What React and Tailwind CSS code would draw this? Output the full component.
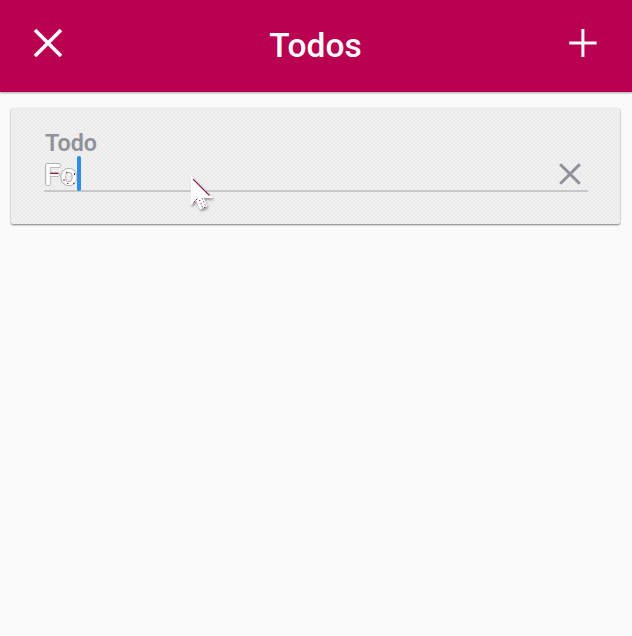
function Header() {
  return (
    <header className="relative z-10 flex h-[92px] shrink-0 items-start justify-between bg-[#b90051] px-[33px] shadow-[0_1px_2px_rgba(0,0,0,0.35)]">
      <svg className="mt-[28px] h-[30px] w-[30px]" viewBox="0 0 30 30" fill="none" stroke="#fff" strokeWidth="3.6" aria-label="Close">
        <path d="M2 2 28 28M28 2 2 28" />
      </svg>
      <h1 className="mt-[26px] text-[33.5px] leading-[40px] font-medium text-white">Todos</h1>
      <svg className="mt-[28px] mr-[1px] h-[30px] w-[30px]" viewBox="0 0 30 30" fill="none" stroke="#fff" strokeWidth="3" aria-label="Add">
        <path d="M14.9 1v28M1.2 15h27.4" />
      </svg>
    </header>
  );
}

function Pointer() {
  return (
    <svg className="absolute left-[187px] top-[171px] h-[44px] w-[34px] drop-shadow-[1px_2px_1px_rgba(0,0,0,0.35)]" viewBox="187 171 34 44" fill="none">
      <path d="M190.7 174.5v31l5.3-4.8 4.2 8.8 7.3-3.2-3.7-8.3h9.2z" fill="#fff" />
      <path d="M193 179 209.5 195.5" stroke="#8d1747" strokeWidth="1.1" />
      <path d="m193.5 202.5 4.5-4.5" stroke="#8d1747" strokeWidth="1" strokeDasharray="2 1" />
      <path d="m199.5 200 3.5 8.2 3-1.4-3.8-8.6" stroke="#8d1747" strokeWidth="1" strokeDasharray="1.2 2.2" />
    </svg>
  );
}

function TodoField() {
  return (
    <section className="ml-[11px] mr-[12px] mt-[16px] flex h-[116px] shrink-0 flex-col rounded-[2px] bg-[#ededed] bg-[repeating-conic-gradient(#eaeaea_0_25%,#f1f1f1_0_50%)] bg-[length:4px_4px] pl-[33px] pr-[32px] pt-[22px] shadow-[0_1px_2px_rgba(0,0,0,0.5)]">
      <label className="h-[25px] pl-[1px] text-[23.3px] leading-[26px] font-semibold text-[#909299]">Todo</label>
      <div className="flex h-[37px] items-start justify-between border-b-2 border-[#c8c8c8]">
        <div className="flex items-start">
          <span className="relative -mr-[2px] w-[35px] text-[30px] leading-[39px] font-medium text-white [text-shadow:-1px_0_0_#a4a4a7,0_-1px_0_#b4b4b7,1px_0_0_#b8b8ba,0_1px_0_#b8b8ba]">
            Fo
            <svg className="absolute left-0 top-0 h-[36px] w-[35px]" viewBox="0 0 35 36" fill="none" stroke="#94234e">
              <path d="M6 18.5h8.5" strokeWidth="1.2" />
              <path d="M22 17.5h1.5M20 24v2M23 28.5h1.5M29 28.5h1.5M30.5 18v2" />
            </svg>
          </span>
          <span className="relative mt-[1px] h-[35px] w-[4px] rounded-[2px] bg-[#2b8de3]" />
        </div>
        <svg className="mr-[7px] mt-[8px] h-[22px] w-[22px]" viewBox="0 0 22 22" fill="none" stroke="#8f9298" strokeWidth="3" aria-label="Clear">
          <path d="M1.2 1.2 20.8 20.8M20.8 1.2 1.2 20.8" />
        </svg>
      </div>
    </section>
  );
}

export default function App() {
  return (
    <main className="relative flex h-[636px] w-[632px] flex-col overflow-hidden bg-[#fafafa] bg-[repeating-conic-gradient(#f8f8f8_0_25%,#fcfcfc_0_50%)] bg-[length:4px_4px] font-['Roboto',sans-serif]">
      <Header />
      <TodoField />
      <Pointer />
    </main>
  );
}
